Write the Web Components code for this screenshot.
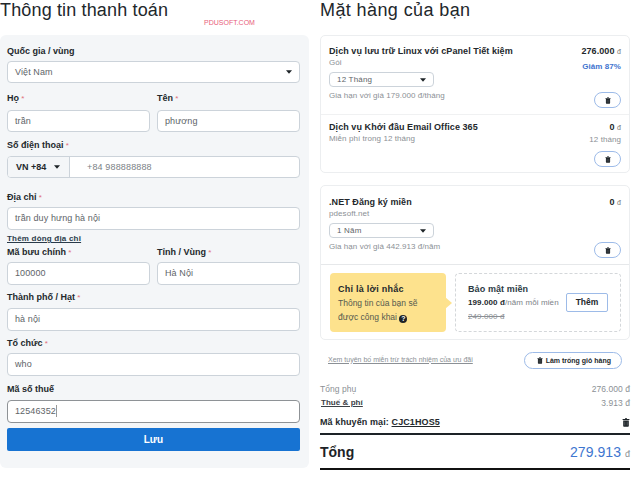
<!DOCTYPE html>
<html lang="vi"><head><meta charset="utf-8"><title>Thanh toán</title>
<style>
html,body{margin:0;padding:0;background:#fff}
body{width:640px;height:491px;overflow:hidden;font-family:"Liberation Sans",Arial,sans-serif;color:#1d2327;position:relative}
</style></head><body>
<checkout-page></checkout-page>
<script>
const def=(name,css,html)=>{
  customElements.define(name,class extends HTMLElement{
    constructor(){super();const r=this.attachShadow({mode:'open'});
      const a=n=>this.getAttribute(n)||'';
      r.innerHTML='<style>'+css+'</style>'+(typeof html==='function'?html(a):html);}
  });
};
const TRASH='<svg width="8" height="9" viewBox="0 0 8 9" aria-hidden="true"><path d="M3 .3h2v.7h2.4v1H.6V1H3z" fill="#1d2327"/><path d="M1.2 2.5h5.6v5.4c0 .5-.4.8-.8.8H2c-.5 0-.8-.3-.8-.8z" fill="#1d2327"/><path d="M2.8 3.6v3.9M5.2 3.6v3.9" stroke="#8a8f93" stroke-width=".5"/></svg>';
const CARET='<svg width="6" height="4" viewBox="0 0 6 4" aria-hidden="true"><path d="M0 .3h6L3 3.8z" fill="#1d2327"/></svg>';

def('text-box',`:host{display:block;box-sizing:border-box;height:var(--h,23px);background:#fff;border:1px solid #ccd3da;border-radius:4px;padding:0 7px;font:9px/21px "Liberation Sans",sans-serif;letter-spacing:.1px;color:#5e6468;white-space:nowrap}
:host([focus]){border-color:#8e9296}`,
a=>a('value')+'<slot></slot>');

def('form-field',`:host{display:block;margin-top:var(--mt,0)}
.l{display:block;height:12px;font:bold 9px/12px "Liberation Sans",sans-serif;color:#23282c;margin-bottom:var(--lg,4px);white-space:nowrap}
.r{color:#e0707a;font-weight:400;font-size:8px}`,
a=>'<span class="l">'+a('label')+(a('req')?'<span class="r"> *</span>':'')+'</span><slot></slot>');

def('select-box',`:host{display:flex;align-items:center;justify-content:space-between;box-sizing:border-box;background:#fff;border:1px solid #ccd3da;border-radius:4px;color:#5e6468;white-space:nowrap}`,
a=>'<span>'+a('value')+'</span>'+CARET);

def('pill-button',`:host{display:inline-flex;align-items:center;justify-content:center;gap:3px;box-sizing:border-box;height:var(--h,16px);min-width:var(--w,27px);padding:var(--p,0);background:#fff;border:1px solid #9dbbe8;border-radius:9px;font:bold 7px "Liberation Sans",sans-serif;color:#23282c;white-space:nowrap}
svg{width:6px;height:7px}`,
TRASH+'<slot></slot>');

def('billing-form',`:host{display:block;width:309px}
h1{margin:0;height:35px;font:400 18px/20px "Liberation Sans",sans-serif;color:#22272b;letter-spacing:.15px;white-space:nowrap}
.panel{background:#f4f6f8;border-radius:6px;padding:10px 9px 17px 7px;height:433px;box-sizing:border-box}
.two{display:grid;grid-template-columns:143px 143px;gap:7px;margin-top:var(--mt,0)}
.two form-field{--mt:0}
select-box{height:22px;padding:0 7px 0 7px;font-size:9px;letter-spacing:.1px}
.phone{display:flex;height:22px;box-sizing:border-box;background:#fff;border:1px solid #ccd3da;border-radius:4px;overflow:hidden}
.cc{display:flex;align-items:center;gap:8px;width:62px;flex:none;box-sizing:border-box;padding-left:8px;background:#f4f6f8;border-right:1px solid #ccd3da;font:bold 9px "Liberation Sans",sans-serif;color:#23282c}
.num{padding-left:17px;font:9px/20px "Liberation Sans",sans-serif;color:#7b8186;letter-spacing:.15px}
a{display:block;height:12px;margin-top:3px;font:bold 8px/12px "Liberation Sans",sans-serif;color:#2a3b4a;text-decoration:underline;letter-spacing:.2px}
button{display:block;width:293px;height:23px;margin-top:5px;padding:0;border:0;border-radius:2px;background:#1773d2;color:#fff;font:bold 10px "Liberation Sans",sans-serif}
.caret{width:1px;height:12px;background:#999;display:inline-block;vertical-align:-3px}
.mark{position:absolute;left:204px;top:18px;font:7px/10px "Liberation Sans",sans-serif;color:#e8607a}`,
`<h1>Thông tin thanh toán</h1><span class="mark">PDUSOFT.COM</span>
<div class="panel">
<form-field label="Quốc gia / vùng"><select-box value="Việt Nam"></select-box></form-field>
<div class="two" style="--mt:9px">
<form-field label="Họ" req="1" style="--lg:6px"><text-box style="--h:22px" value="trần"></text-box></form-field>
<form-field label="Tên" req="1" style="--lg:6px"><text-box style="--h:22px" value="phương"></text-box></form-field></div>
<form-field label="Số điện thoại" req="1" style="--mt:7px;--lg:5px"><div class="phone"><span class="cc">VN +84 ${CARET}</span><span class="num">+84 988888888</span></div></form-field>
<form-field label="Địa chỉ" req="1" style="--mt:13px"><text-box value="trần duy hưng hà nội"></text-box></form-field>
<a>Thêm dòng địa chỉ</a>
<div class="two" style="--mt:1px">
<form-field label="Mã bưu chính" req="1"><text-box value="100000"></text-box></form-field>
<form-field label="Tỉnh / Vùng" req="1"><text-box value="Hà Nội"></text-box></form-field></div>
<form-field label="Thành phố / Hạt" req="1" style="--mt:6px;--lg:5px"><text-box value="hà nội"></text-box></form-field>
<form-field label="Tổ chức" req="1" style="--mt:6px"><text-box value="who"></text-box></form-field>
<form-field label="Mã số thuế" style="--mt:7px;--lg:5px"><text-box focus value="12546352"><span class="caret"></span></text-box></form-field>
<button type="button">Lưu</button>
</div>`);

def('cart-row',`:host{display:flex;justify-content:space-between;box-sizing:border-box;padding:var(--pt,9px) 8px 0 8px;height:var(--rh,78px)}
.t{font:bold 9px/12px "Liberation Sans",sans-serif;letter-spacing:.07px;color:#23282c;white-space:nowrap}
.s{font:8px/12px "Liberation Sans",sans-serif;letter-spacing:.07px;color:#8b9095;white-space:nowrap}
.m{display:flex;flex-direction:column;align-items:flex-end;font:8px/12px "Liberation Sans",sans-serif;letter-spacing:.07px;color:#8b9095}
.p{font:bold 9px/12px "Liberation Sans",sans-serif;color:#23282c;white-space:nowrap}
.p small{font-size:7px;font-weight:400;color:#777}
.sp{flex:1}
.d{font:bold 8px/12px "Liberation Sans",sans-serif;color:#3f74cf;margin-top:3px}
.n{white-space:nowrap}
pill-button{margin-bottom:var(--pb,6px)}`,
a=>`<div><div class="t">${a('name')}</div><div class="s">${a('sub')}</div><slot></slot></div>
<div class="m"><div class="p">${a('price')} <small>đ</small></div>${a('disc')?`<div class="d">${a('disc')}</div>`:''}${a('note')?`<div class="n">${a('note')}</div>`:''}<div class="sp"></div><pill-button></pill-button></div>`);

def('term-select',`:host{display:block}
select-box{width:105px;height:15px;margin-top:3px;padding:0 7px;font-size:8px;letter-spacing:.2px}
p{margin:3px 0 0;font:8px/12px "Liberation Sans",sans-serif;letter-spacing:.05px;color:#8b9095;white-space:nowrap}`,
a=>`<select-box value="${a('value')}"></select-box><p>${a('note')}</p>`);

def('cart-card',`:host{display:block;background:#fff;border:1px solid #eceef0;border-radius:5px;box-sizing:border-box;overflow:hidden}`,'<slot></slot>');

def('upsell-panel',`:host{display:flex;gap:9px;padding:8px 8px 7px 9px;height:75px;box-sizing:border-box;border-top:1px solid #e6e8ea}
.y{position:relative;flex:none;width:116px;background:#fde28d;border-radius:4px;padding:9px 8px;box-sizing:border-box;font:8.5px/14px "Liberation Sans",sans-serif;color:#555a4f;white-space:nowrap}
.y b{display:block;color:#23282c;font-size:9px;letter-spacing:.25px}
.y:after{content:"";position:absolute;right:-6px;top:24px;border-left:7px solid #fde28d;border-top:6px solid transparent;border-bottom:6px solid transparent}
.q{display:inline-block;width:8px;height:8px;border-radius:50%;background:#1d2327;color:#fff;font:bold 7px/8px "Liberation Sans",sans-serif;text-align:center;vertical-align:-1px}
.b{flex:1;min-width:0;display:flex;align-items:center;justify-content:space-between;border:1px dashed #d4d7da;border-radius:4px;padding:0 12px 0 12px;box-sizing:border-box}
.c{font:8px/14px "Liberation Sans",sans-serif;letter-spacing:.1px;color:#7c8287;white-space:nowrap}
.c b{color:#23282c}.c .h{display:block;font-size:9px;color:#2c3a44}
.c s{color:#8b9095}
.a{flex:none;width:42px;height:19px;box-sizing:border-box;border:1px solid #9dbbe8;border-radius:2px;font:bold 8.5px/17px "Liberation Sans",sans-serif;color:#23282c;text-align:center}`,
`<div class="y"><b>Chỉ là lời nhắc</b>Thông tin của bạn sẽ<br>được công khai <span class="q">?</span></div>
<div class="b"><div class="c"><b class="h">Bảo mật miền</b><b>199.000 đ</b>/năm mỗi miền<br><s>249.000 đ</s></div><div class="a">Thêm</div></div>`);

def('order-summary',`:host{display:block}
.top{display:flex;justify-content:space-between;align-items:center;padding:0 8px 0 8px;margin-top:12px;height:17px}
.top a{font:7px "Liberation Sans",sans-serif;color:#8b9095;text-decoration:underline;margin-top:-3px}
.row{display:flex;justify-content:space-between;font:8.5px/14px "Liberation Sans",sans-serif;color:#8b9095;letter-spacing:.05px}
.r1{margin-top:13px}
.row u{font:bold 8px/14px "Liberation Sans",sans-serif;color:#3b4045;margin-left:1px}
.promo{display:flex;justify-content:space-between;align-items:center;height:14px;margin-top:5px;font:bold 9px/14px "Liberation Sans",sans-serif;color:#23282c;letter-spacing:.1px}
.tot{display:flex;justify-content:space-between;align-items:center;border-top:2px solid #1d2327;border-bottom:2px solid #111;height:37px;box-sizing:border-box;margin-top:4px;font:bold 14px "Liberation Sans",sans-serif;color:#1d2327}
.tot span{font:400 14px "Liberation Sans",sans-serif;color:#3e76d0;letter-spacing:.05px}
.tot small{font-size:9px;color:#8b9095}`,
`<div class="top"><a>Xem tuyên bố miễn trừ trách nhiệm của ưu đãi</a><pill-button style="--h:17px;--p:0 10px 0 12px">Làm trống giỏ hàng</pill-button></div>
<div class="row r1"><span>Tổng phụ</span><span>276.000 đ</span></div>
<div class="row"><u>Thuế &amp; phí</u><span>3.913 đ</span></div>
<div class="promo"><span>Mã khuyến mại: <u>CJC1HOS5</u></span>${TRASH}</div>
<div class="tot">Tổng<span>279.913 <small>đ</small></span></div>`);

def('cart-column',`:host{display:block;width:310px}
h1{margin:0;height:35px;font:400 18px/20px "Liberation Sans",sans-serif;color:#22272b;letter-spacing:.4px;white-space:nowrap}
.c1{height:138px;margin-bottom:12px}.c2{height:155px}
cart-row+cart-row{border-top:1px solid #f0f1f2}`,
`<h1>Mặt hàng của bạn</h1>
<cart-card class="c1">
<cart-row name="Dịch vụ lưu trữ Linux với cPanel Tiết kiệm" sub="Gói" price="276.000" disc="Giảm 87%"><term-select value="12 Tháng" note="Gia hạn với giá 179.000 đ/tháng"></term-select></cart-row>
<cart-row style="--rh:58px;--pt:6px;--pb:5px" name="Dịch vụ Khởi đầu Email Office 365" sub="Miễn phí trong 12 tháng" price="0" note="12 tháng"></cart-row>
</cart-card>
<cart-card class="c2">
<cart-row style="--pt:10px" name=".NET Đăng ký miền" sub="pdesoft.net" price="0"><term-select value="1 Năm" note="Gia hạn với giá 442.913 đ/năm"></term-select></cart-row>
<upsell-panel></upsell-panel>
</cart-card>
<order-summary></order-summary>`);

def('checkout-page',`:host{display:flex;gap:11px;align-items:flex-start}`,`<billing-form></billing-form><cart-column></cart-column>`);
</script>
</body></html>
